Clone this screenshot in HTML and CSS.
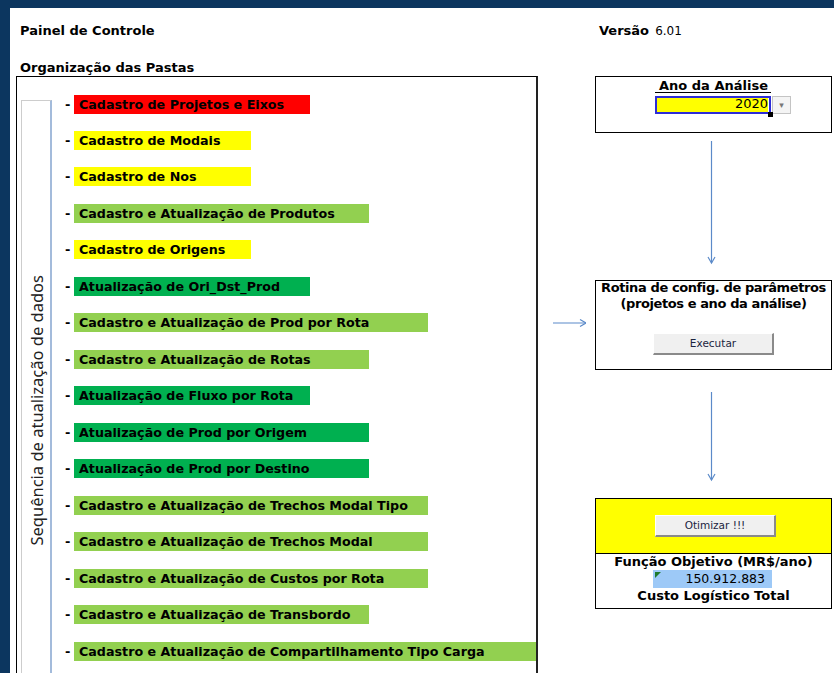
FILE: index.html
```html
<!DOCTYPE html>
<html lang="pt">

<head>
    <meta charset="UTF-8">
    <title>Painel de Controle</title>
    <link rel="stylesheet" href="styles.css">
</head>

<body>
    <div class="sheet">
        <div class="titulo">Painel de Controle</div>
        <div></div>
        <div class="versao"><b>Versão</b> <span>6.01</span></div>

        <div class="subtitulo">Organização das Pastas</div>

        <!-- caixa das pastas -->
        <div class="pastas">
            <div class="seq"><span>Sequência de atualização de dados</span></div>
            <ul class="itens">
                <li><span class="traco">-</span><span class="barra vermelho c4">Cadastro de Projetos e Eixos</span></li>
                <li><span class="traco">-</span><span class="barra amarelo c3">Cadastro de Modais</span></li>
                <li><span class="traco">-</span><span class="barra amarelo c3">Cadastro de Nos</span></li>
                <li><span class="traco">-</span><span class="barra verde c5">Cadastro e Atualização de Produtos</span></li>
                <li><span class="traco">-</span><span class="barra amarelo c3">Cadastro de Origens</span></li>
                <li><span class="traco">-</span><span class="barra escuro c4">Atualização de Ori_Dst_Prod</span></li>
                <li><span class="traco">-</span><span class="barra verde c6">Cadastro e Atualização de Prod por Rota</span></li>
                <li><span class="traco">-</span><span class="barra verde c5">Cadastro e Atualização de Rotas</span></li>
                <li><span class="traco">-</span><span class="barra escuro c4">Atualização de Fluxo por Rota</span></li>
                <li><span class="traco">-</span><span class="barra escuro c5">Atualização de Prod por Origem</span></li>
                <li><span class="traco">-</span><span class="barra escuro c5">Atualização de Prod por Destino</span></li>
                <li><span class="traco">-</span><span class="barra verde c6">Cadastro e Atualização de Trechos Modal Tipo</span></li>
                <li><span class="traco">-</span><span class="barra verde c6">Cadastro e Atualização de Trechos Modal</span></li>
                <li><span class="traco">-</span><span class="barra verde c6">Cadastro e Atualização de Custos por Rota</span></li>
                <li><span class="traco">-</span><span class="barra verde c5">Cadastro e Atualização de Transbordo</span></li>
                <li><span class="traco">-</span><span class="barra verde c8">Cadastro e Atualização de Compartilhamento Tipo Carga</span></li>
            </ul>
        </div>

        <!-- seta entre as pastas e a rotina -->
        <div class="ligacao">
            <svg width="40" height="10" viewBox="0 0 40 10">
                <line x1="7" y1="5" x2="40" y2="5" stroke="#5b8ac9" stroke-width="1.2" />
                <polyline points="34,1.5 40,5 34,8.5" fill="none" stroke="#5b8ac9" stroke-width="1.2" />
            </svg>
        </div>

        <div class="painel">
            <div class="caixa ano">
                <div class="cab">Ano da Análise</div>
                <div class="linha-ano">
                    <div class="entrada">2020</div>
                    <div class="lista">&#9662;</div>
                </div>
            </div>

            <svg class="seta" width="237" height="147" viewBox="0 0 237 147">
                <line x1="116.5" y1="8" x2="116.5" y2="130" stroke="#5b8ac9" stroke-width="1.2" />
                <polyline points="113,124 116.5,130 120,124" fill="none" stroke="#5b8ac9" stroke-width="1.2" />
            </svg>

            <div class="caixa rotina">
                <div class="cab">Rotina de config. de parâmetros<br>(projetos e ano da análise)</div>
                <div class="botao">Executar</div>
            </div>

            <svg class="seta" width="237" height="128" viewBox="0 0 237 128">
                <line x1="116.5" y1="22" x2="116.5" y2="110" stroke="#5b8ac9" stroke-width="1.2" />
                <polyline points="113,104 116.5,110 120,104" fill="none" stroke="#5b8ac9" stroke-width="1.2" />
            </svg>

            <div class="caixa otimizar">
                <div class="faixa">
                    <div class="botao">Otimizar !!!</div>
                </div>
                <div class="cab">Função Objetivo (MR$/ano)</div>
                <div class="valor">150.912.883</div>
                <div class="cab">Custo Logístico Total</div>
            </div>
        </div>
    </div>
</body>

</html>
```

FILE: styles.css
```css
* {
    margin: 0px;
    padding: 0px;
    list-style: none;
    box-sizing: border-box;
}

body {
    background: #0c365f;
    height: 673px;
    overflow: hidden;
    font-family: "DejaVu Sans", Verdana, sans-serif;
    color: #000;
}

/* folha branca */
.sheet {
    margin: 8px 0 0 10px;
    height: 665px;
    background: #fff;
    padding-left: 6px;
    display: grid;
    grid-template-columns: 522px 57px 237px;
    grid-template-rows: auto auto 1fr;
    overflow: hidden;
}

.titulo,
.subtitulo {
    font-weight: bold;
    font-size: 13px;
    line-height: 16px;
    padding-left: 4px;
}

.titulo {
    padding-top: 15px;
}

.versao {
    padding-top: 15px;
    padding-left: 4px;
    font-size: 13px;
    line-height: 16px;
}

.versao span {
    font-size: 12px;
    margin-left: 2px;
}

.subtitulo {
    grid-column: 1 / 4;
    margin-top: 21px;
}

/* caixa das pastas */
.pastas {
    border: 1px solid #000;
    border-right: 2px solid #222;
    height: 640px;
    display: flex;
    align-items: flex-start;
    padding-left: 4px;
    overflow: hidden;
}

.seq {
    flex: none;
    width: 31px;
    height: 620px;
    margin-top: 23px;
    border: 1px solid #cdcdcd;
    border-right: 2px solid #a3bbdb;
    display: flex;
    align-items: center;
    justify-content: center;
}

.seq span {
    writing-mode: vertical-rl;
    transform: rotate(180deg);
    font-family: "Noto Sans", "DejaVu Sans", sans-serif;
    font-size: 16.5px;
    color: #222;
    white-space: nowrap;
}

.itens {
    margin-left: 12px;
    padding-top: 8.8px;
}

.itens li {
    height: 36.47px;
    display: flex;
    align-items: center;
}

.traco {
    flex: none;
    width: 10px;
    padding-left: 1px;
    font-weight: bold;
    font-size: 13px;
}

.barra {
    flex: none;
    height: 19px;
    line-height: 19px;
    padding-left: 5px;
    font-weight: bold;
    font-size: 12.7px;
    white-space: nowrap;
}

.vermelho {
    background: #ff0000;
}

.amarelo {
    background: #ffff00;
}

.verde {
    background: #92d050;
}

.escuro {
    background: #00b050;
}

.c3 {
    width: 177px;
}

.c4 {
    width: 236px;
}

.c5 {
    width: 295px;
}

.c6 {
    width: 354px;
}

.c8 {
    width: 470px;
}

/* seta lateral */
.ligacao {
    padding-top: 242px;
    padding-left: 8px;
}

.ligacao svg,
.seta {
    display: block;
}

/* coluna da direita */
.painel {
    display: flex;
    flex-direction: column;
}

.caixa {
    border: 1px solid #000;
    text-align: center;
}

.cab {
    font-weight: bold;
    font-size: 13px;
    line-height: 16px;
    white-space: nowrap;
}

.ano {
    height: 57px;
    padding-top: 1px;
}

.linha-ano {
    display: flex;
    margin-left: 59px;
    margin-top: -2px;
}

.entrada {
    width: 116px;
    height: 23px;
    border-top: 1px solid #000;
    padding: 3px 3px 1px 0;
    position: relative;
    text-align: right;
    font-size: 13px;
    line-height: 15px;
    background: #ffff00;
    background-clip: content-box;
}

.entrada::before {
    content: "";
    position: absolute;
    left: 0;
    right: 0;
    top: 3px;
    bottom: 1px;
    border: 2px solid #2d2dd8;
}

.entrada::after {
    content: "";
    position: absolute;
    right: -2px;
    bottom: -2px;
    width: 5px;
    height: 5px;
    background: #000;
}

.lista {
    width: 19px;
    height: 18px;
    margin-top: 4px;
    margin-left: 1px;
    border: 1px solid #c4c4c4;
    background: #f4f4f4;
    color: #777;
    font-size: 9px;
    line-height: 16px;
}

.rotina {
    height: 90px;
}

.rotina .cab {
    margin-top: -1px;
    letter-spacing: -0.4px;
}

.botao {
    width: 121px;
    height: 22px;
    margin: 0 auto;
    background: #f0f0f0;
    border: 1px solid #fff;
    border-right: 2px solid #8a8a8a;
    border-bottom: 2px solid #8a8a8a;
    font-family: "DejaVu Sans", sans-serif;
    font-size: 10.5px;
    line-height: 18px;
    color: #1b2440;
}

.rotina .botao {
    margin-top: 21px;
}

.otimizar {
    height: 111px;
}

.faixa {
    height: 55px;
    background: #ffff00;
    border-bottom: 1px solid #000;
    padding-top: 16px;
}

.otimizar .botao {
    margin-left: 59px;
}

.valor {
    width: 119px;
    height: 18px;
    margin-left: 57px;
    background: #9dc9f7;
    text-align: right;
    padding-right: 7px;
    font-size: 12.5px;
    line-height: 18px;
    position: relative;
}

/* triângulo verde da célula */
.valor::before {
    content: "";
    position: absolute;
    left: 2px;
    top: 2px;
    border-top: 6px solid #1f7a2e;
    border-right: 6px solid transparent;
}
```
